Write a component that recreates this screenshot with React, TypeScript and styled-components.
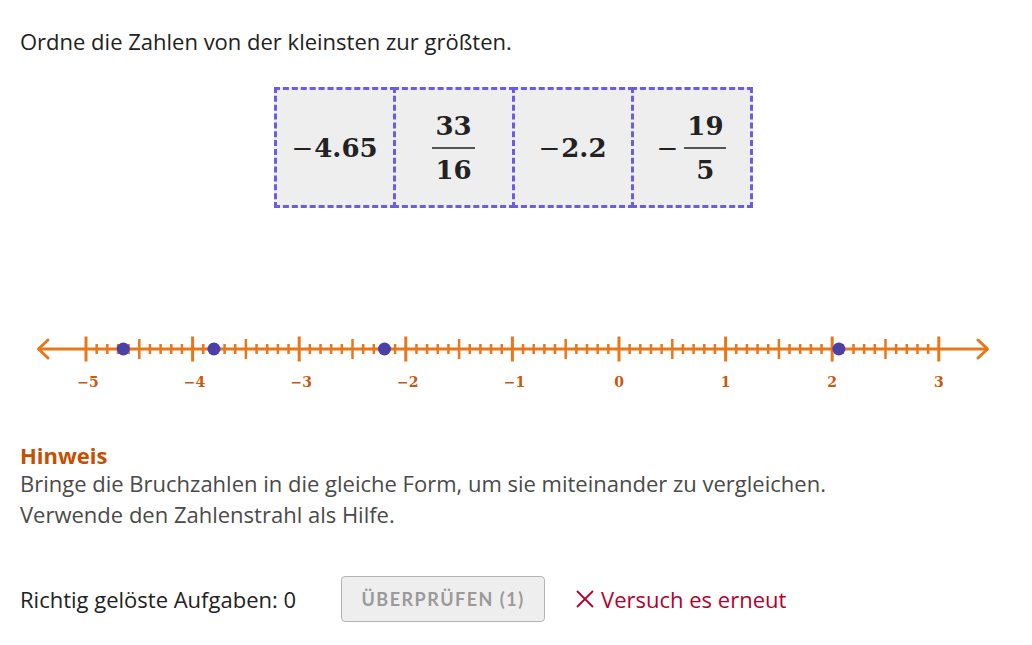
import styled, { createGlobalStyle } from 'styled-components';
import type { ReactElement } from 'react';

const GlobalStyle = createGlobalStyle`
  html, body {
    margin: 0;
    padding: 0;
    background: #ffffff;
  }
  body {
    font-family: "Open Sans", Lato, sans-serif;
    color: #222222;
  }
`;

const MATH = '"DejaVu Serif", "Liberation Serif", serif';

const Page = styled.div`
  width: 1032px;
  height: 645px;
  overflow: hidden;
  display: flex;
  flex-direction: column;
`;

const Prompt = styled.p`
  margin: 27px 0 0 20px;
  font-size: 22px;
  line-height: 28px;
  color: #222222;
`;

const CardRow = styled.div`
  display: flex;
  justify-content: center;
  margin: 32px 0 0;
  padding-right: 6px;
`;

const Card = styled.div`
  width: 122px;
  height: 121px;
  box-sizing: border-box;
  background: #eeeeee;
  border: 3px dashed #6b5ce0;
  display: flex;
  align-items: center;
  justify-content: center;
  font-family: ${MATH};
  font-weight: bold;
  font-size: 26px;
  color: #222222;

  & + & {
    margin-left: -3px;
  }
`;

const Fraction = styled.span`
  display: inline-flex;
  flex-direction: column;
  align-items: center;
  line-height: 32px;
`;

const Numer = styled.span`
  padding: 0 3px 5px;
  border-bottom: 2px solid #555555;
`;

const Denom = styled.span`
  padding: 5px 3px 0;
`;

const Minus = styled.span<{ $gap?: number }>`
  font-weight: normal;
  margin-right: ${p => p.$gap ?? 1}px;
`;

const LineWrap = styled.div`
  margin-top: 110px;
  height: 80px;
`;

const Hint = styled.section`
  margin: 44px 0 0 20px;
`;

const HintTitle = styled.h3`
  margin: 0;
  font-size: 22px;
  line-height: 26px;
  font-weight: bold;
  color: #c84e00;
`;

const HintText = styled.p`
  margin: 0;
  font-size: 22px;
  line-height: 31px;
  color: #4a4a4a;
`;

const Footer = styled.div`
  margin: 46px 0 0 20px;
  display: flex;
  align-items: center;
  height: 46px;
`;

const Score = styled.span`
  font-size: 22px;
  color: #222222;
`;

const CheckButton = styled.button`
  margin-left: 45px;
  width: 204px;
  height: 46px;
  box-sizing: border-box;
  border: 1px solid #b4b4b4;
  border-radius: 4px;
  background: #eeeeee;
  color: #9a9a9a;
  font-family: Lato, "Open Sans", sans-serif;
  font-weight: bold;
  font-size: 18px;
  letter-spacing: 1.5px;
  padding: 0;
  cursor: default;
`;

const Feedback = styled.span`
  margin-left: 30px;
  display: inline-flex;
  align-items: center;
  gap: 6px;
  font-size: 22px;
  color: #b5002d;
`;

const ORANGE = '#e8761a';
const LABEL = '#c85a0a';
const DOT = '#4b3fa8';

const x0 = 619;
const unit = 106.6;
const toX = (v: number) => x0 + v * unit;
const LY = 31;

function NumberLine(): ReactElement {
  const ticks: ReactElement[] = [];
  for (let i = -50; i <= 30; i++) {
    const major = i % 10 === 0;
    const medium = !major && i % 5 === 0;
    const half = major ? 12.5 : medium ? 10 : 5;
    const x = toX(i / 10);
    ticks.push(
      <line
        key={i}
        x1={x}
        x2={x}
        y1={LY - half}
        y2={LY + half}
        stroke={ORANGE}
        strokeWidth={major ? 3 : 2.5}
      />
    );
  }
  const labels = [-5, -4, -3, -2, -1, 0, 1, 2, 3];
  const dots = [-4.65, -3.8, -2.2, 2.0625];

  return (
    <svg width={1032} height={80} viewBox='0 0 1032 80'>
      <line x1={38} x2={988} y1={LY} y2={LY} stroke={ORANGE} strokeWidth={3} />
      <path
        d={`M48 ${LY - 9} L38.5 ${LY} L48 ${LY + 9}`}
        fill='none'
        stroke={ORANGE}
        strokeWidth={3}
        strokeLinecap='round'
        strokeLinejoin='round'
      />
      <path
        d={`M978 ${LY - 9} L987.5 ${LY} L978 ${LY + 9}`}
        fill='none'
        stroke={ORANGE}
        strokeWidth={3}
        strokeLinecap='round'
        strokeLinejoin='round'
      />
      {ticks}
      {dots.map(v => (
        <circle key={v} cx={toX(v)} cy={LY} r={6.5} fill={DOT} />
      ))}
      {labels.map(v => (
        <text
          key={v}
          x={toX(v) + (v < 0 ? 2 : 0)}
          y={69}
          textAnchor='middle'
          fill={LABEL}
          fontFamily={MATH}
          fontWeight='bold'
          fontSize={14}>
          {v < 0 ? `\u2212${-v}` : v}
        </text>
      ))}
    </svg>
  );
}

export default function App(): ReactElement {
  return (
    <Page>
      <GlobalStyle />
      <Prompt>Ordne die Zahlen von der kleinsten zur größten.</Prompt>

      <CardRow>
        <Card>
          <Minus>−</Minus>4.65
        </Card>
        <Card>
          <Fraction>
            <Numer>33</Numer>
            <Denom>16</Denom>
          </Fraction>
        </Card>
        <Card>
          <Minus>−</Minus>2.2
        </Card>
        <Card>
          <Minus $gap={6}>−</Minus>
          <Fraction>
            <Numer>19</Numer>
            <Denom>5</Denom>
          </Fraction>
        </Card>
      </CardRow>

      <LineWrap>
        <NumberLine />
      </LineWrap>

      <Hint>
        <HintTitle>Hinweis</HintTitle>
        <HintText>
          Bringe die Bruchzahlen in die gleiche Form, um sie miteinander zu vergleichen.
          <br />
          Verwende den Zahlenstrahl als Hilfe.
        </HintText>
      </Hint>

      <Footer>
        <Score>Richtig gelöste Aufgaben: 0</Score>
        <CheckButton>ÜBERPRÜFEN (1)</CheckButton>
        <Feedback>
          <svg width={20} height={20} viewBox='0 0 20 20'>
            <path d='M2 2 L18 18 M18 2 L2 18' stroke='#b5002d' strokeWidth={1.8} />
          </svg>
          Versuch es erneut
        </Feedback>
      </Footer>
    </Page>
  );
}
